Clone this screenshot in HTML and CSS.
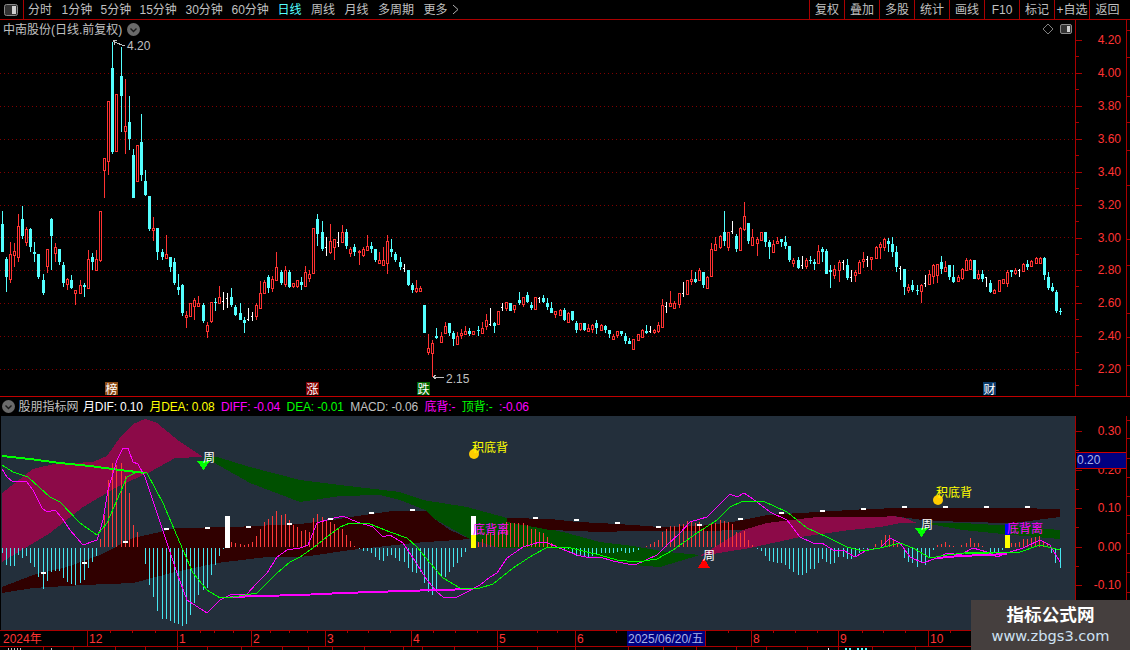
FILE: index.html
```html
<!DOCTYPE html>
<html lang="zh-CN">
<head>
<meta charset="utf-8">
<title>中南股份 日线</title>
<link rel="stylesheet" href="styles.css">
</head>
<body>
<div class="page">
  <nav class="toolbar">
    <div class="panel-btn">
      <svg class="panel-icon" width="14" height="12" viewBox="0 0 14 12"><rect x="0.5" y="0.5" width="13" height="11" rx="2" class="pi-frame"/><rect x="8" y="2" width="4" height="8" class="pi-fill"/></svg>
    </div>
    <div class="periods">
      <span class="period">分时</span>
      <span class="period w1">1分钟</span>
      <span class="period w1">5分钟</span>
      <span class="period w2">15分钟</span>
      <span class="period w2">30分钟</span>
      <span class="period w2">60分钟</span>
      <span class="period active">日线</span>
      <span class="period">周线</span>
      <span class="period">月线</span>
      <span class="period">多周期</span>
      <span class="period more">更多 <svg width="7" height="11" viewBox="0 0 7 11"><path d="M1 1 L6 5.5 L1 10" class="chev"/></svg></span>
    </div>
    <div class="tools">
      <span class="tool">复权</span>
      <span class="tool">叠加</span>
      <span class="tool">多股</span>
      <span class="tool">统计</span>
      <span class="tool">画线</span>
      <span class="tool">F10</span>
      <span class="tool">标记</span>
      <span class="tool">+自选</span>
      <span class="tool last">返回</span>
    </div>
  </nav>

  <section class="pane main-pane">
    <div class="chart">
      <header class="chart-title">
        <span>中南股份(日线.前复权)</span>
        <svg class="round-chevron" width="13" height="13" viewBox="0 0 13 13"><circle cx="6.5" cy="6.5" r="6.5" class="rc-bg"/><path d="M3.5 5.5 L6.5 8.5 L9.5 5.5" class="rc-mark"/></svg>
      </header>
      <div class="chart-corner">
        <svg width="10" height="10" viewBox="0 0 10 10"><path d="M5 0 L10 5 L5 10 L0 5 Z" class="diamond"/></svg>
        <svg width="12" height="10" viewBox="0 0 12 10"><rect x="0.5" y="0.5" width="11" height="9" rx="1.5" class="pi-frame"/><rect x="7" y="2" width="3" height="6" class="pi-fill"/></svg>
      </div>
      <svg id="kline" class="fill-svg" viewBox="0 20 1075 376">
        <g id="grid"></g>
        <g id="candles"></g>
        <path d="M125 46 L118 43.5 L113.5 41 M113.5 41 L117 40 M113.5 41 L115 45" class="note-line"/>
        <text x="127" y="50" class="t-grey">4.20</text>
        <path d="M444 377 L433 377 M433 377 L436 375 M433 377 L436 379" class="note-line"/>
        <text x="446" y="383" class="t-grey">2.15</text>
        <rect x="105" y="382" width="13" height="13" class="badge-bang"/>
        <text x="105.5" y="393.5" class="t-white">榜</text>
        <rect x="306" y="382" width="13" height="13" class="badge-up"/>
        <text x="306.5" y="393.5" class="t-white">涨</text>
        <rect x="417" y="382" width="13" height="13" class="badge-down"/>
        <text x="417.5" y="393.5" class="t-white">跌</text>
        <rect x="983" y="382" width="13" height="13" class="badge-fin"/>
        <text x="983.5" y="393.5" class="t-white">财</text>
      </svg>
    </div>
    <div class="axis">
      <svg id="main-axis" class="fill-svg" viewBox="1076 20 54 376"></svg>
    </div>
  </section>

  <div class="ind-head">
    <svg class="round-chevron" width="13" height="13" viewBox="0 0 13 13"><circle cx="6.5" cy="6.5" r="6.5" class="rc-bg"/><path d="M3.5 5.5 L6.5 8.5 L9.5 5.5" class="rc-mark"/></svg>
    <span class="c-grey name">股朋指标网</span>
    <span class="c-white">月DIF: 0.10</span>
    <span class="c-yellow">月DEA: 0.08</span>
    <span class="c-magenta">DIFF: -0.04</span>
    <span class="c-green">DEA: -0.01</span>
    <span class="c-grey">MACD: -0.06</span>
    <span class="c-magenta">底背:-</span>
    <span class="c-green">顶背:-</span>
    <span class="c-magenta">:-0.06</span>
  </div>

  <section class="pane ind-pane">
    <div class="chart">
      <svg id="macd" class="fill-svg ind-bg" viewBox="1 416 1074 214">
        <polygon class="crimson" points="2,562 2,493 33,469 54,464 93,462 107,456 121,436 133,424 145,419 157,423 179,441 203,457 175,458 150,472 117,487 83,507 50,533 17,553"/>
        <polygon class="crimson" points="700,556 723,542 743,530 767,523 817,517 880,517 893,516 905,518 917,523 900,523 880,527 850,530 800,537 750,548"/>
        <polygon class="forest" points="203,457 217,457 250,467 300,480 340,485 400,492 423,500 467,507 507,518 517,522 567,533 600,542 633,546 667,552 700,555 660,567 633,565 600,557 550,548 500,548 470,539 433,518 425,510 400,500 380,495 340,496 300,502 250,483 213,462"/>
        <polygon class="forest" points="917,523 963,523 1013,526 1060,530 1060,539 1013,535 963,530 935,525"/>
        <polygon class="maroon" points="2,587 33,575 67,567 100,555 133,538 160,532 175,528 233,527 300,524 333,520 357,516 393,511 427,511 433,518 450,530 470,539 413,543 350,550 317,555 300,557 267,557 217,563 175,572 133,583 83,585 33,588 2,593"/>
        <polygon class="maroon" points="507,518 550,519 577,522 600,523 633,525 660,527 700,526 733,522 767,515 817,512 867,509 900,508 960,508 1013,508 1060,509 1060,517 1013,523 963,522 923,520 893,516 880,517 817,517 767,523 743,530 700,531 660,531 633,531 600,532 550,530 507,522"/>
        <g id="bars"></g>
        <polyline class="ln-green-thick" points="2,456 30,459 60,463 90,466 120,470 145,473"/>
        <polyline class="ln-mag-thick" points="230,597 260,596 300,595 343,593 403,591 473,589"/>
        <polyline class="ln-mag-thick" points="937,558 960,556 985,555 1007,554"/>
        <polyline class="ln-green-thick thin2" points="965,553 993,553"/>
        <polyline class="ln-mag" points="2,469 7,477 13,482 20,481 27,482 33,490 42,508 47,512 55,510 62,518 70,530 83,545 97,540 103,520 108,490 117,460 123,448 128,448 133,462 138,464 145,477 157,513 167,543 177,573 187,600 207,613 220,600 230,595 247,594 257,583 267,573 277,557 287,550 300,548 308,545 317,523 330,519 343,516 357,522 373,527 383,537 390,535 403,543 413,558 427,580 437,592 443,597 457,597 467,592 480,585 490,577 497,573 507,558 523,547 540,542 548,543 557,547 577,555 590,558 600,557 613,561 628,564 637,564 657,555 667,545 680,533 690,522 707,517 717,507 730,494 737,497 744,493 753,499 770,512 787,520 800,537 813,543 822,543 833,550 843,550 855,557 867,550 880,548 890,538 900,543 910,557 923,563 937,558 947,553 960,555 973,548 987,552 997,557 1007,553 1023,548 1040,540 1050,545 1060,562"/>
        <polyline class="ln-green" points="2,465 13,472 28,477 50,497 60,502 80,523 97,535 107,523 117,500 127,477 137,472 147,473 163,503 180,543 193,573 207,590 220,598 233,597 257,593 277,573 290,562 300,557 313,548 323,540 340,527 350,523 370,524 390,532 407,538 417,547 430,563 443,578 460,588 477,589 493,584 513,568 533,555 548,547 567,547 587,552 600,555 617,560 637,562 657,559 673,550 697,533 717,520 730,507 743,501 763,501 787,512 807,528 827,537 847,547 863,551 880,548 900,543 913,548 930,558 947,555 973,552 993,553 1020,552 1040,545 1060,550"/>
        <g id="dashes"></g>
        <rect x="225" y="516" width="5" height="32" class="f-white"/>
        <rect x="471" y="516" width="5" height="19" class="f-white"/>
        <rect x="471" y="535" width="5" height="13" class="f-yellow"/>
        <rect x="1005" y="524" width="5" height="11" class="f-blue"/>
        <rect x="1005" y="535" width="5" height="13" class="f-yellow"/>
        <polygon class="f-lime" points="197,461 210,461 203.5,470"/>
        <polygon class="f-lime" points="915,528 928,528 921.5,537"/>
        <polygon class="f-red" points="704,558 710,568 698,568"/>
        <circle cx="474" cy="454" r="5" class="f-gold"/>
        <circle cx="938" cy="500" r="5" class="f-gold"/>
        <text x="203" y="462" class="t-white">周</text>
        <text x="703" y="560" class="t-white">周</text>
        <text x="921" y="529" class="t-white">周</text>
        <text x="472" y="452" class="t-yellow">积底背</text>
        <text x="936" y="497" class="t-yellow">积底背</text>
        <text x="473" y="534" class="t-magenta">底背离</text>
        <text x="1007" y="533" class="t-magenta">底背离</text>
      </svg>
    </div>
    <div class="axis">
      <svg id="ind-axis" class="fill-svg" viewBox="1076 416 54 214"></svg>
    </div>
  </section>

  <svg id="date-axis" class="date-axis" viewBox="0 630 1130 20">
    <g id="date-lines"></g>
    <text x="3" y="643" class="t-red">2024年</text>
    <text x="89" y="643" class="t-red">12</text>
    <text x="179" y="643" class="t-red">1</text>
    <text x="253" y="643" class="t-red">2</text>
    <text x="327" y="643" class="t-red">3</text>
    <text x="413" y="643" class="t-red">4</text>
    <text x="499" y="643" class="t-red">5</text>
    <text x="577" y="643" class="t-red">6</text>
    <rect x="627" y="631" width="78" height="15" class="f-navy"/>
    <text x="628" y="643" class="t-date">2025/06/20/五</text>
    <text x="753" y="643" class="t-red">8</text>
    <text x="840" y="643" class="t-red">9</text>
    <text x="930" y="643" class="t-red">10</text>
  </svg>

  <aside class="watermark">
    <div class="wm-title">指标公式网</div>
    <div class="wm-url">www.zbgs3.com</div>
  </aside>
</div>
<script src="chart.js"></script>
</body>
</html>
```
FILE: styles.css
```css
* { box-sizing: border-box; }
html, body { margin: 0; padding: 0; background: #000; }
body {
  font-family: "Liberation Sans", "Noto Sans CJK SC", sans-serif;
  font-size: 12px;
  line-height: 1;
  color: #c0c0c0;
  overflow: hidden;
}
.page {
  position: relative;
  width: 1130px;
  height: 650px;
  display: flex;
  flex-direction: column;
  overflow: hidden;
}

.toolbar {
  display: flex;
  align-items: stretch;
  height: 20px;
  border-bottom: 1px solid #aa0000;
  flex: none;
}
.panel-btn {
  width: 24px;
  display: flex;
  align-items: center;
  justify-content: center;
  border-right: 1px solid #aa0000;
  padding-right: 1px;
}
.pi-frame { fill: #333; stroke: #8a8a8a; }
.pi-fill { fill: #d0d0d0; }
.periods {
  display: flex;
  align-items: center;
  gap: 9.5px;
  padding-left: 4px;
  flex: 1;
}
.period { white-space: nowrap; }
.period.w1 { width: 29.5px; }
.period.w2 { width: 36.5px; }
.period.active { color: #54ffff; }
.more { display: flex; align-items: center; gap: 4px; }
.chev { fill: none; stroke: #b0b0b0; }
.tools { display: flex; }
.tool {
  width: 35px;
  display: flex;
  align-items: center;
  justify-content: center;
  border-left: 1px solid #aa0000;
  white-space: nowrap;
}
.tool.last { width: 41px; padding-right: 5px; }

.pane { display: flex; flex: none; }
.main-pane { height: 377px; border-bottom: 1px solid #c00000; }
.ind-pane { height: 214px; }
.chart { position: relative; flex: 1; min-width: 0; }
.axis {
  width: 55px;
  flex: none;
  border-left: 1px solid #aa0000;
}
.fill-svg { display: block; width: 100%; height: 100%; shape-rendering: crispEdges; }
.chart-title {
  position: absolute;
  left: 3px;
  top: 3px;
  display: flex;
  align-items: center;
  gap: 5px;
}
.chart-corner {
  position: absolute;
  right: 3px;
  top: 4px;
  display: flex;
  align-items: center;
  gap: 7px;
}
.round-chevron { display: block; flex: none; }
.rc-bg { fill: #6a6a6a; }
.rc-mark { fill: none; stroke: #1a1a1a; stroke-width: 1.4; }
.diamond { fill: none; stroke: #808080; }

.ind-head {
  display: flex;
  align-items: center;
  gap: 6.5px;
  height: 19px;
  flex: none;
  padding: 0 0 0 2px;
  white-space: nowrap;
  letter-spacing: -0.15px;
}
.ind-head .name { margin-left: -3px; margin-right: -2px; letter-spacing: 0; }
.c-grey { color: #c0c0c0; }
.c-white { color: #fff; }
.c-yellow { color: #ffff00; }
.c-magenta { color: #ff00ff; }
.c-green { color: #00ff00; }

.ind-bg { background: #232f3b; }
#macd { margin-left: 1px; width: calc(100% - 1px); }
.crimson { fill: #8c0a48; }
.forest { fill: #005000; }
.maroon { fill: #300000; }
.ln-mag, .ln-green, .ln-green-thick, .ln-mag-thick { fill: none; }
.ln-mag { stroke: #ff00ff; stroke-width: 1; }
.ln-green { stroke: #00ff00; stroke-width: 1; }
.ln-green-thick { stroke: #00ff00; stroke-width: 2; }
.ln-mag-thick { stroke: #ff00ff; stroke-width: 2; }
.thin2 { stroke-width: 2; }
.f-white { fill: #fff; }
.f-yellow { fill: #ffff00; }
.f-blue { fill: #0000ff; }
.f-lime { fill: #00ff00; }
.f-red { fill: #ff0000; }
.f-gold { fill: #ffcc00; shape-rendering: geometricPrecision; }
.f-navy { fill: #000080; }
.note-line { fill: none; stroke: #c0c0c0; }
.badge-bang { fill: #8b4a14; }
.badge-up { fill: #800000; }
.badge-down { fill: #006400; }
.badge-fin { fill: #0a3a6a; }
svg text { font-size: 12px; }
.t-grey { fill: #c0c0c0; }
.t-white { fill: #fff; }
.t-yellow { fill: #ffff00; }
.t-magenta { fill: #ff00ff; }
.t-red { fill: #ff3333; }
.t-date { fill: #a8b4e8; }

.date-axis { display: block; flex: none; width: 1130px; height: 20px; shape-rendering: crispEdges; }

.watermark {
  position: absolute;
  left: 971px;
  top: 600px;
  width: 159px;
  height: 50px;
  background: #453f3e;
  display: flex;
  flex-direction: column;
  align-items: center;
  padding-top: 7px;
  gap: 4px;
}
.wm-title { font-size: 17.6px; font-weight: 700; color: #fff; }
.wm-url { font-family: "DejaVu Sans", sans-serif; font-size: 14.6px; color: #cfe2f3; }
```
FILE: chart.js
```js
var SVGNS = 'http://www.w3.org/2000/svg';
var LINE = '#aa0000', RED = '#ff3232', CYAN = '#54ffff', WHITE = '#ffffff';

function rect(parent, x, y, w, h, fill) {
  var r = document.createElementNS(SVGNS, 'rect');
  r.setAttribute('x', x); r.setAttribute('y', y);
  r.setAttribute('width', w); r.setAttribute('height', h);
  r.setAttribute('fill', fill);
  parent.appendChild(r);
}
function label(parent, x, y, str, cls, anchor) {
  var t = document.createElementNS(SVGNS, 'text');
  t.setAttribute('x', x); t.setAttribute('y', y);
  t.setAttribute('class', cls);
  if (anchor) t.setAttribute('text-anchor', anchor);
  t.textContent = str;
  parent.appendChild(t);
}

/* Candles: each section has an origin; row = x type high top bottom low, in 3x units */
var sections = [
 {x0:0, y0:30, rows:"7 c 543 582 665 665;19 c 682 688 740 785;31 r 636 673 748 758;43 r 640 664 674 710;55 r 552 588 682 695;67 c 528 567 618 626;79 r 590 598 635 648;91 c 595 597 651 665;103 c 636 666 671 695;115 c 672 672 741 747;130 c 733 750 789 795;142 r 657 658 707 730;154 c 565 567 617 720;166 r 640 652 668 695;178 c 657 657 696 705;190 c 697 705 759 771;202 r 745 748 762 780;214 c 735 750 775 778;226 r 781 781 789 825;241 r 750 766 788 790;253 c 760 765 770 802;265 r 660 687 773 773;277 c 668 682 696 720;289 r 660 687 720 720;301 r 544 544 689 695;313 r 385 385 421 503;325 r 213 213 392 435;337 c 35 114 367 372;349 r 193 193 362 362;364 c 50 138 197 305;376 r 147 288 303 372;388 c 197 276 326 360;400 c 357 375 503 503;412 r 346 346 452 452;424 c 252 336 435 452;436 c 420 453 495 498;448 c 498 498 597 602;460 r 561 594 599 633;472 c 594 594 665 690;487 c 657 666 681 690;499 r 615 673 683 683;511 c 682 682 711 725;523 c 683 696 760 765;535 c 732 771 780 795;547 c 762 766 850 858;559 r 843 855 860 893;571 r 818 820 858 862;583 r 805 811 828 870;595 r 798 820 829 832;610 c 820 825 873 878;622 r 877 885 903 923;634 r 817 817 873 878;646 c 805 815 820 843;658 r 768 802 818 823;670 w 786 812 812 840;682 w 788 803 803 834;694 c 775 801 824 832;706 c 825 830 854 858"},
 {x0:240, y0:200, rows:"1 c 310 340 360 360;13 c 350 360 370 398;25 w 325 358 358 362;37 w 335 348 348 362;49 r 310 316 347 360;61 r 243 280 323 323;73 r 240 246 278 278;85 c 225 232 265 278;97 r 228 237 263 275;109 r 156 202 240 240;124 c 210 215 249 255;136 r 198 210 252 260;148 c 210 216 262 265;160 r 250 250 258 265;172 r 240 241 258 265;184 c 232 246 255 270;196 r 198 216 258 260;208 r 210 222 234 245;220 r 85 85 218 218;232 c 42 57 102 138;247 c 64 96 147 153;259 w 110 140 140 167;271 r 72 123 157 162;283 r 118 118 140 180;295 w 97 125 125 142;307 r 75 95 125 125;319 c 87 96 138 146;331 r 142 148 159 170;343 c 133 141 156 167;358 r 150 153 157 195;370 r 142 148 165 170;382 r 105 138 150 150;394 c 126 138 147 160;406 c 148 148 180 187;418 r 157 180 189 192;430 r 140 180 194 194;442 r 105 123 188 222;454 c 117 148 156 170;466 c 155 162 180 187;481 c 171 186 201 210;493 w 192 204 204 216;505 c 210 210 255 258;517 c 248 256 270 278;529 r 240 264 274 278;541 r 258 264 273 275;553 c 315 315 398 398;565 r 402 444 456 465;577 r 420 430 460 530;589 c 385 408 413 418;604 r 397 408 426 428;616 r 366 378 400 402;628 c 370 370 400 408;640 c 393 400 416 438;652 r 397 408 431 431;664 r 388 400 404 417;676 r 378 393 401 403;688 c 384 393 401 408;700 r 393 394 401 403;715 c 378 390 394 408"},
 {x0:480, y0:190, rows:"7 r 396 415 428 428;19 r 372 390 408 420;31 w 354 403 403 407;43 c 395 400 408 428;55 r 363 363 402 405;67 w 340 350 350 362;79 r 337 337 353 362;91 c 339 339 362 362;103 r 346 346 357 370;118 c 306 331 340 345;130 r 322 322 342 351;142 c 306 316 336 340;154 c 337 345 354 360;166 r 320 322 357 360;178 w 320 325 325 340;190 c 316 324 336 340;202 c 324 339 351 360;214 c 336 354 369 370;226 r 364 364 372 385;241 r 357 361 374 378;253 c 354 360 390 392;265 r 366 369 396 400;277 c 363 363 390 393;289 c 393 399 420 429;301 r 400 400 417 424;313 c 399 399 420 423;325 r 403 415 422 425;337 r 402 405 416 430;349 c 390 399 414 432;364 r 403 406 421 424;376 c 405 408 420 430;388 c 420 420 432 444;400 r 433 438 446 446;412 r 424 424 434 445;424 c 423 423 432 438;436 c 430 438 453 461;448 c 444 453 461 461;460 r 447 447 476 476;475 r 432 432 449 452;487 r 418 420 441 444;499 c 405 424 429 432;511 w 407 424 424 429;523 r 417 420 425 431;535 r 396 405 422 429;547 r 327 345 411 414;559 w 336 348 348 369;571 r 303 339 349 351;583 r 333 339 353 354;598 r 310 310 342 354;610 w 276 309 309 321;622 r 271 271 311 312;634 r 240 267 274 286;646 c 246 267 276 279;658 r 234 240 269 270;670 c 246 246 285 295;682 r 258 261 293 294;694 r 159 178 258 258;706 r 141 163 179 180;721 r 135 138 171 177;733 c 63 126 153 168;745 r 126 127 171 183;757 w 93 123 123 132;769 c 132 138 178 186;781 r 112 115 180 183;793 r 36 78 118 123;805 c 99 99 153 162;817 r 117 141 165 168;832 r 141 147 159 198;844 r 126 127 150 153;856 c 126 126 156 171;868 c 150 156 171 207;880 r 150 163 186 186;892 r 141 153 159 162"},
 {x0:780, y0:190, rows:"4 c 147 147 156 170;16 c 138 156 168 177;28 c 168 168 210 216;40 r 204 209 219 231;55 c 201 210 233 237;67 w 198 226 226 237;79 r 204 210 228 237;91 c 198 210 213 222;103 c 207 216 222 240;115 r 165 183 219 222;127 c 171 177 186 216;139 c 177 183 252 252;151 c 225 240 245 294;163 r 225 237 255 267;178 r 210 216 240 276;190 w 210 216 216 240;202 c 207 225 264 270;214 w 240 260 260 276;226 r 240 246 255 276;238 r 210 216 248 250;250 r 186 207 213 235;262 w 198 208 208 231;274 r 201 202 207 240;289 r 168 171 204 207;301 r 156 162 171 207;313 r 144 147 171 183;325 c 144 153 162 186;337 c 141 162 186 201;349 c 168 186 231 246;361 w 228 234 234 270;373 c 237 237 291 315;385 r 282 291 300 309;397 c 270 285 300 306;412 c 285 300 304 315;424 r 282 285 303 340;436 w 255 278 278 291;448 r 240 252 282 282;460 r 222 225 258 282;472 r 222 222 255 279;484 c 198 216 237 252;496 r 213 231 243 246;508 c 225 225 261 270;520 c 225 261 276 279;535 r 255 261 273 276;547 r 234 237 264 270;559 r 204 210 240 243;571 r 207 210 237 240;583 c 210 210 267 267;595 r 240 252 264 270;607 c 240 252 268 276;619 w 261 262 262 291;631 c 270 279 306 309;643 r 297 300 309 309;658 r 270 270 303 303;670 r 267 267 279 282;682 r 240 246 279 291;694 c 240 240 246 261;706 r 234 240 250 255;718 w 237 240 240 261;730 r 219 222 243 246;742 c 210 222 231 240;754 r 210 212 228 231;769 r 201 204 219 222;781 r 201 204 219 222;793 c 201 204 255 270;805 c 246 261 294 300;817 c 279 291 303 306;829 c 300 306 363 369;841 c 354 363 365 375"}
];

var candleG = document.getElementById('candles');
sections.forEach(function (sec) {
  sec.rows.split(';').forEach(function (row) {
    var p = row.split(' ');
    var px = Math.floor(sec.x0 + (+p[0]) / 3);
    var Y = function (v) { return Math.round(sec.y0 + (+v) / 3); };
    var hi = Y(p[2]), top = Y(p[3]), bot = Y(p[4]), lo = Y(p[5]);
    var color = p[1] === 'c' ? CYAN : p[1] === 'r' ? RED : WHITE;
    rect(candleG, px, hi, 1, Math.max(lo - hi, 1), color);
    if (p[1] === 'w') {
      rect(candleG, px - 1, top, 1, 1, color);
      return;
    }
    var h = Math.max(bot - top, 1) + (p[1] === 'r' ? 1 : 0);
    rect(candleG, px - 1, top, 3, h, color);
    if (p[1] === 'r' && h > 2) rect(candleG, px, top + 1, 1, h - 2, '#000');
  });
});

/* Price grid */
var grid = document.getElementById('grid');
[73, 106, 139, 172, 205, 237, 270, 303, 336, 369].forEach(function (y) {
  for (var x = 0; x < 1075; x += 4) rect(grid, x, y, 1, 1, '#800000');
});

/* Price axis */
var mainAxis = document.getElementById('main-axis');
[['4.20',40],['4.00',73],['3.80',106],['3.60',139],['3.40',172],['3.20',205],['3.00',238],['2.80',270],['2.60',303],['2.40',336],['2.20',369]].forEach(function (a) {
  rect(mainAxis, 1076, a[1], 6, 1, LINE);
  rect(mainAxis, 1076, a[1] + 16, 3, 1, LINE);
  label(mainAxis, 1121, a[1] + 4, a[0], 't-red', 'end');
});
rect(mainAxis, 1126, 20, 1, 376, LINE);
[30, 57, 96, 122, 150, 185, 239, 265, 313, 337, 365].forEach(function (y) { rect(mainAxis, 1127, y, 3, 1, LINE); });

/* MACD bars: x in 3x units, tip in 3x units */
var barSecs = [
 {x0:0, y0:440, base:322, s:"7:340 19:375 31:378 43:378 55:345 67:355 79:348 91:368 103:380 115:412 130:447 142:423 154:395 166:392 178:392 190:415 202:425 214:432 226:435 241:430 253:420 265:385 277:365 289:348 301:298 313:225 325:120 337:70 349:75 364:70 376:108 388:158 400:255 412:277 436:372 448:435 460:470 472:513 487:537 499:537 511:543 523:548 535:552 547:557 559:552 571:525 583:490 595:465 610:450 622:445 634:405 646:375 658:348 670:325 682:313 694:305 706:310 721:312 733:316 745:312 757:305 769:288 781:267 793:247 805:237 817:228 829:213 844:225 856:222 868:240 880:255 892:262"},
 {x0:300, y0:480, base:202, s:"4:152 16:150 28:155 40:113 52:102 67:110 79:122 91:125 103:132 115:145 127:148 139:165 151:183 163:198 178:208 190:213 202:213 214:218 226:232 238:240 250:243 262:228 274:226 286:233 298:243 313:247 325:263 337:277 349:280 361:275 373:308 385:335 397:345 409:335 424:290 436:290 448:275 460:260 472:248 484:230 496:215 535:185 547:177 559:162 571:158 583:158 595:155 607:150 619:125 631:130 643:130 655:130 670:130 682:135 694:148 706:148 718:155 730:158 742:172 754:188 766:195 793:208 805:208 817:218 829:228 841:228 853:232 865:230 877:227 889:225"},
 {x0:600, y0:470, base:232, s:"4:248 16:248 28:250 40:250 52:247 64:244 76:248 88:250 100:246 115:240 127:230 139:228 151:222 163:217 175:210 187:185 199:177 211:168 223:168 238:163 250:163 262:153 274:153 286:158 298:155 310:175 322:182 334:160 346:160 361:150 373:153 385:155 397:162 409:185 421:190 433:182 445:210 457:224 472:237 484:244 496:258 508:272 520:275 532:278 544:280 556:285 568:298 580:306 595:315 607:315 619:310 631:298 643:298 655:278 667:268 679:275 691:282 703:280 715:262 730:262 742:267 754:268 766:262 778:248 790:237 802:234 814:230 826:222"},
 {x0:880, y0:380, base:502, s:"4:480 16:465 28:465 40:480 52:490 73:535 85:545 97:550 112:560 124:545 136:555 148:530 160:510 172:495 184:493 196:487 208:495 220:499 232:500 244:495 259:490 271:475 283:490 295:490 307:497 319:500 331:515 343:520 355:515 367:510 394:490 406:490 418:485 430:478 442:478 454:475 466:470 478:468 490:485 502:490 514:520 526:548 541:563"}
];
var bars = document.getElementById('bars');
barSecs.forEach(function (sec) {
  sec.s.split(' ').forEach(function (item) {
    var p = item.split(':');
    var x = Math.floor(sec.x0 + (+p[0]) / 3);
    var tip = Math.round(sec.y0 + (+p[1]) / 3);
    var zero = 547;
    if (+p[1] < sec.base) rect(bars, x, tip, 1, zero - tip, '#ff3a3a');
    else rect(bars, x, zero + 1, 1, Math.max(tip - zero - 1, 1), '#46e6f0');
  });
});

/* White monthly marks */
var dashes = document.getElementById('dashes');
[[43,573],[84,563],[125,542],[166,529],[207,528],[248,527],[289,524],[330,519],[371,513],[412,510],[535,518],[576,520],[617,523],[658,527],[699,525],[740,519],[781,513],[822,511],[863,509],[904,507],[945,507],[986,507],[1027,507]].forEach(function (d) {
  rect(dashes, d[0] - 2, d[1] - 1, 5, 2, '#fff');
});

/* Indicator axis */
var indAxis = document.getElementById('ind-axis');
[['0.30',431],['0.20',470],['0.10',508],['0.00',547],['-0.10',585]].forEach(function (a) {
  rect(indAxis, 1076, a[1], 6, 1, LINE);
  rect(indAxis, 1076, a[1] + 19, 3, 1, LINE);
  label(indAxis, 1121, a[1] + 4, a[0], 't-red', 'end');
});
rect(indAxis, 1126, 416, 1, 214, LINE);
[420, 438, 458, 477, 496, 515, 533, 553, 572, 592].forEach(function (y) { rect(indAxis, 1127, y, 3, 1, LINE); });
rect(indAxis, 1077, 452, 49, 16, '#000080');
rect(indAxis, 1076, 452, 50, 1, '#cc0000');
rect(indAxis, 1076, 468, 50, 1, '#cc0000');
label(indAxis, 1077, 464, '0.20', 't-date');

/* Date axis lines and ticks */
var dl = document.getElementById('date-lines');
rect(dl, 0, 630, 1130, 1, LINE);
rect(dl, 0, 646, 1130, 1, LINE);
rect(dl, 1075, 630, 1, 20, LINE);
[87, 177, 251, 325, 411, 497, 575, 627, 705, 751, 838, 928].forEach(function (x) { rect(dl, x, 630, 1, 16, LINE); });
[110,132,155,200,214,233,270,289,307,347,368,390,433,455,477,537,557,616,728,773,795,817,862,883,905,950].forEach(function (x) { rect(dl, x, 631, 1, 2, LINE); });
[43,73,115,145,177,207,241,282,308,332,364,403,422,454,497,537,575,628,663,696,736,766,807,838,872,915].forEach(function (x) { rect(dl, x, 647, 1, 3, LINE); });
[8,11,14,17,20].forEach(function (x) { rect(dl, x, 648, 1, 2, '#c0c0c0'); });
rect(dl, 51, 648, 1, 2, '#c0c0c0');
rect(dl, 828, 648, 1, 2, '#fff');
[845, 849, 857, 861, 865].forEach(function (x) { rect(dl, x, 648, 2, 2, '#54ffff'); });
```
